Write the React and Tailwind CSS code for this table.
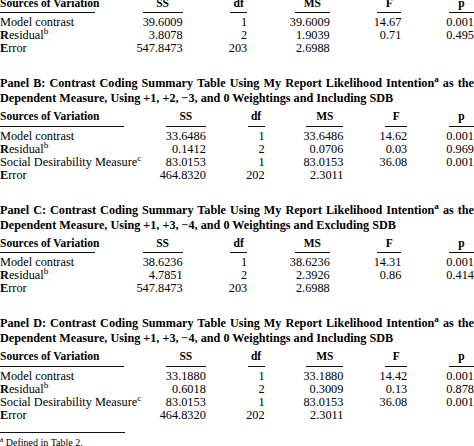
import React from 'react'

// ANOVA contrast coding summary tables (Panels A-D)
const narrowCols = 'grid-cols-[95px_40px_17px_35px_24px_25px]'
const wideCols = 'grid-cols-[124px_40px_17px_37px_22px_25px]'

const panels = [
  {
    id: 'A',
    wide: false,
    rows: [
      ['Model contrast', '39.6009', '1', '39.6009', '14.67', '0.001'],
      ['Residual', '3.8078', '2', '1.9039', '0.71', '0.495'],
      ['Error', '547.8473', '203', '2.6988', '', ''],
    ],
  },
  {
    id: 'B',
    wide: true,
    line2: 'Dependent Measure, Using +1, +2, \u22123, and 0 Weightings and Including SDB',
    rows: [
      ['Model contrast', '33.6486', '1', '33.6486', '14.62', '0.001'],
      ['Residual', '0.1412', '2', '0.0706', '0.03', '0.969'],
      ['Social', '83.0153', '1', '83.0153', '36.08', '0.001'],
      ['Error', '464.8320', '202', '2.3011', '', ''],
    ],
  },
  {
    id: 'C',
    wide: false,
    line2: 'Dependent Measure, Using +1, +3, \u22124, and 0 Weightings and Excluding SDB',
    rows: [
      ['Model contrast', '38.6236', '1', '38.6236', '14.31', '0.001'],
      ['Residual', '4.7851', '2', '2.3926', '0.86', '0.414'],
      ['Error', '547.8473', '203', '2.6988', '', ''],
    ],
  },
  {
    id: 'D',
    wide: true,
    line2: 'Dependent Measure, Using +1, +3, \u22124, and 0 Weightings and Including SDB',
    rows: [
      ['Model contrast', '33.1880', '1', '33.1880', '14.42', '0.001'],
      ['Residual', '0.6018', '2', '0.3009', '0.13', '0.878'],
      ['Social', '83.0153', '1', '83.0153', '36.08', '0.001'],
      ['Error', '464.8320', '202', '2.3011', '', ''],
    ],
  },
]

const SourceLabel = ({ name }) => {
  if (name === 'Residual') {
    return (
      <span>
        <span className="font-bold">R</span>esidual<sup>b</sup>
      </span>
    )
  }
  if (name === 'Error') {
    return (
      <span>
        <span className="font-bold">E</span>rror
      </span>
    )
  }
  if (name === 'Social') {
    return (
      <span>
        Social Desirability Measure<sup>c</sup>
      </span>
    )
  }
  return <span>{name}</span>
}

const Panel = ({ panel, first }) => {
  const cols = panel.wide ? wideCols : narrowCols
  return (
    <div className={first ? '-mt-[3.5px]' : 'mt-[21px]'}>
      {panel.line2 && (
        <div className="mb-[4px] text-[12.2px] font-bold leading-[15px]">
          <div className="text-justify [text-align-last:justify] whitespace-nowrap">
            Panel {panel.id}: Contrast Coding Summary Table Using My Report Likelihood Intention<sup>a</sup> as the
          </div>
          <div className="whitespace-nowrap">{panel.line2}</div>
        </div>
      )}

      {/* Header */}
      <div className={`grid ${cols} justify-between text-[11.5px] font-bold leading-[13px]`}>
        {['Sources of Variation', 'SS', 'df', 'MS', 'F', 'p'].map((h, i) => (
          <div
            key={h}
            className={`border-b border-[#111] pb-[2.5px] whitespace-nowrap ${i === 0 ? 'text-left' : 'text-center'}`}
          >
            {h}
          </div>
        ))}
      </div>

      {/* Rows */}
      <div className="mt-[3px] text-[12.3px] leading-[13px]">
        {panel.rows.map((row) => (
          <div key={row[0]} className={`grid ${cols} justify-between`}>
            <div className="whitespace-nowrap">
              <SourceLabel name={row[0]} />
            </div>
            {row.slice(1).map((v, i) => (
              <div key={i} className="flex justify-end whitespace-nowrap">
                {v}
              </div>
            ))}
          </div>
        ))}
      </div>
    </div>
  )
}

export default function App() {
  return (
    <div
      className="w-[474px] h-[446px] overflow-hidden bg-white text-black"
      style={{ fontFamily: '"Liberation Serif", "Times New Roman", serif' }}
    >
      {panels.map((p, i) => (
        <Panel key={p.id} panel={p} first={i === 0} />
      ))}

      {/* Footnote */}
      <div className="mt-[10px] w-[125px] border-t border-[#111]" />
      <div className="mt-[4px] text-[10px] leading-[12px]">
        <sup>a</sup> Defined in Table 2.
      </div>
    </div>
  )
}
